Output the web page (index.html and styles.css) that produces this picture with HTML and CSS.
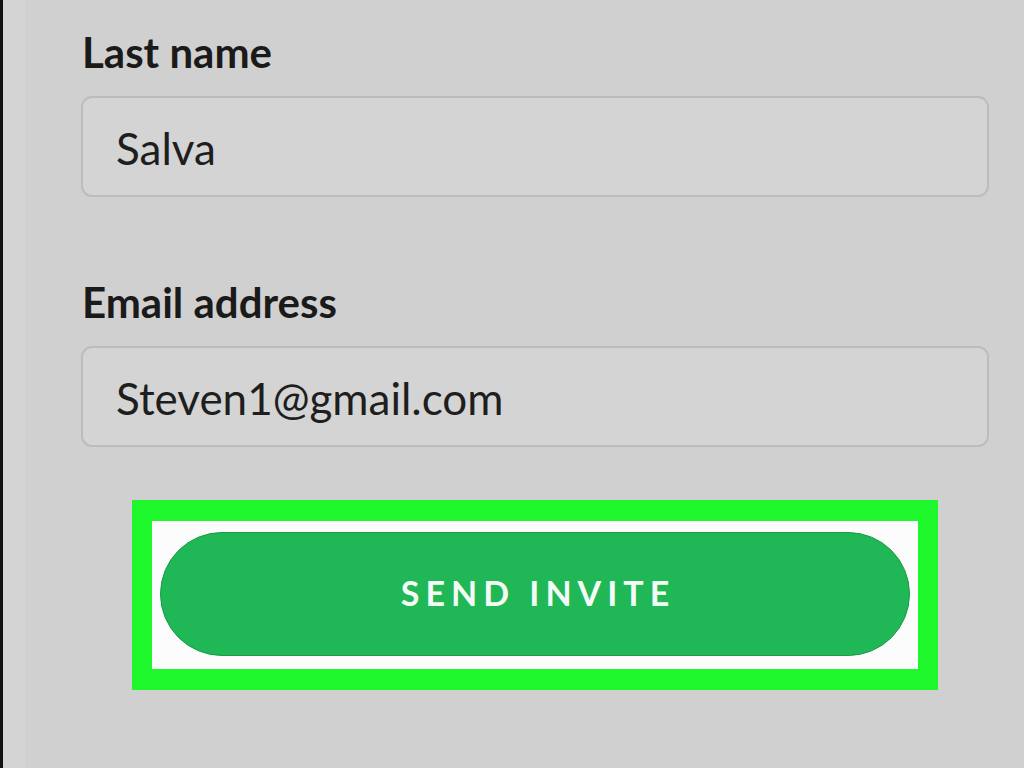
FILE: index.html
```html
<!DOCTYPE html>
<html lang="en">

<head>
    <meta charset="UTF-8">
    <meta name="viewport" content="width=device-width, initial-scale=1.0">
    <title>Invite</title>
    <link rel="stylesheet" href="styles.css">
</head>

<body>
    <div class="page">
        <div class="edge"></div>
        <form class="invite-form">
            <div class="field">
                <label class="field-label">Last name</label>
                <div class="field-input">Salva</div>
            </div>
            <div class="field">
                <label class="field-label">Email address</label>
                <div class="field-input">Steven1@gmail.com</div>
            </div>
            <div class="highlight">
                <div class="highlight-inner">
                    <button type="button" class="send-btn">SEND INVITE</button>
                </div>
            </div>
        </form>
    </div>
</body>

</html>
```

FILE: styles.css
```css
* {
    margin: 0;
    padding: 0;
    box-sizing: border-box;
}

body {
    font-family: 'Lato', 'Noto Sans', sans-serif;
    background: #d0d0d0;
    color: #1c1c1c;
    width: 1024px;
    height: 768px;
    overflow: hidden;
}

.page {
    display: flex;
    height: 768px;
}

.edge {
    width: 25px;
    flex-shrink: 0;
    border-left: 3px solid #111;
    background: #d4d4d4;
}

.invite-form {
    display: flex;
    flex-direction: column;
    padding: 28px 0 0 56px;
    width: 990px;
}

.field {
    display: flex;
    flex-direction: column;
    width: 908px;
}

.field + .field {
    margin-top: 81px;
}

.field-label {
    font-size: 42px;
    font-weight: 700;
    line-height: 48px;
    color: #1a1a1a;
    padding-left: 1px;
    margin-bottom: 20px;
}

.field-input {
    height: 101px;
    border: 2px solid #bcbcbc;
    border-radius: 11px;
    background: #d4d4d4;
    font-size: 44px;
    line-height: 100px;
    padding-left: 33px;
    color: #1e1e1e;
}

.highlight {
    margin: 53px 0 0 51px;
    width: 806px;
    height: 190px;
    background: #1ef72c;
    padding: 21px 20px;
}

.highlight-inner {
    background: #fcfcfc;
    height: 100%;
    padding: 11px 8px 0 8px;
}

.send-btn {
    width: 750px;
    height: 124px;
    border-radius: 62px;
    border: 1px solid #1a9a47;
    background: #20b756;
    color: #f4fbf6;
    font-family: 'Lato', sans-serif;
    font-size: 34px;
    font-weight: 700;
    letter-spacing: 6px;
    text-indent: 6px;
    padding-bottom: 4px;
}
```
